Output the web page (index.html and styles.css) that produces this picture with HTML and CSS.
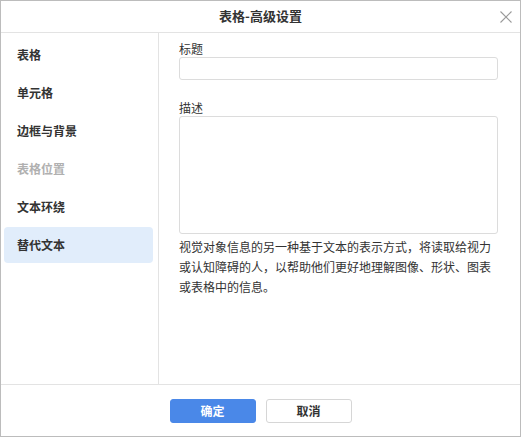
FILE: index.html
```html
<!DOCTYPE html>
<html lang="zh-CN">
<head>
<meta charset="utf-8">
<title>表格-高级设置</title>
<link rel="stylesheet" href="styles.css">
</head>
<body>
<div class="dialog">
  <div class="header">
    <span class="title">表格-高级设置</span>
    <span class="close" aria-label="关闭">
      <svg width="12" height="12" viewBox="0 0 12 12"><path d="M0.5 0.5 L11.5 11.5 M11.5 0.5 L0.5 11.5" stroke="#9a9a9a" stroke-width="1.1" fill="none"/></svg>
    </span>
  </div>
  <div class="main">
    <div class="sidebar">
      <div class="nav-item">表格</div>
      <div class="nav-item">单元格</div>
      <div class="nav-item">边框与背景</div>
      <div class="nav-item disabled">表格位置</div>
      <div class="nav-item">文本环绕</div>
      <div class="nav-item active">替代文本</div>
    </div>
    <div class="content">
      <div class="label">标题</div>
      <div class="input"></div>
      <div class="label label-gap">描述</div>
      <div class="textarea"></div>
      <p class="hint">视觉对象信息的另一种基于文本的表示方式，将读取给视力或认知障碍的人，以帮助他们更好地理解图像、形状、图表或表格中的信息。</p>
    </div>
  </div>
  <div class="footer">
    <button class="btn primary">确定</button>
    <button class="btn">取消</button>
  </div>
</div>
</body>
</html>
```

FILE: styles.css
```css
* { box-sizing: border-box; }
html, body { margin: 0; padding: 0; background: #fff; }
body {
  font-family: "Noto Sans CJK SC", "Noto Sans", "Liberation Sans", sans-serif;
  color: #333;
  font-size: 12px;
}
.dialog {
  width: 521px;
  height: 437px;
  border: 1px solid #bcbcbc;
  display: flex;
  flex-direction: column;
  background: #fff;
}
.header {
  height: 32px;
  flex: none;
  border-bottom: 1px solid #e3e3e3;
  display: flex;
  align-items: center;
  justify-content: center;
  position: relative;
}
.title {
  font-size: 13px;
  font-weight: bold;
  color: #333;
  line-height: 16px;
  margin-top: -1px;
}
.close {
  position: absolute;
  right: 8px;
  top: 10px;
  width: 12px;
  height: 12px;
  display: flex;
}
.main {
  flex: 1;
  display: flex;
  min-height: 0;
}
.sidebar {
  width: 158px;
  flex: none;
  border-right: 1px solid #e3e3e3;
  padding: 4px 5px 0 3px;
  display: flex;
  flex-direction: column;
  gap: 2px;
}
.nav-item {
  height: 36px;
  line-height: 36px;
  padding-left: 13px;
  font-weight: bold;
  font-size: 12px;
  color: #333;
  border-radius: 4px;
}
.nav-item.disabled { color: #b0b0b0; }
.nav-item.active { background: #e1edfb; }
.content {
  flex: 1;
  padding: 7px 22px 0 20px;
}
.label {
  font-size: 12px;
  line-height: 17px;
  color: #333;
}
.label-gap { margin-top: 19px; }
.input {
  height: 23px;
  border: 1px solid #dcdcdc;
  border-radius: 3px;
}
.textarea {
  height: 118px;
  border: 1px solid #dcdcdc;
  border-radius: 3px;
}
.hint {
  margin: 3px 0 0 0;
  font-size: 12px;
  line-height: 20px;
  color: #333;
}
.footer {
  height: 52px;
  flex: none;
  border-top: 1px solid #e3e3e3;
  display: flex;
  justify-content: center;
  gap: 10px;
  padding-top: 14px;
}
.btn {
  width: 86px;
  height: 24px;
  border: 1px solid #d6d6d6;
  border-radius: 3px;
  background: #fff;
  color: #333;
  font-family: inherit;
  font-size: 12px;
  font-weight: bold;
  padding: 0;
  line-height: 22px;
}
.btn.primary {
  background: #4a88e8;
  border-color: #4a88e8;
  color: #fff;
}
```
